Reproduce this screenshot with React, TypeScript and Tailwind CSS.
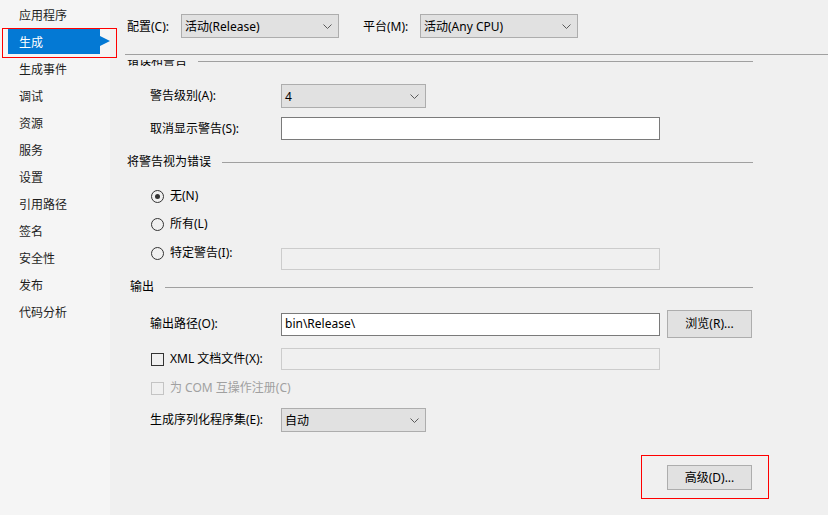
import React from 'react';

const font = { fontFamily: '"Segoe UI", "Noto Sans", "Noto Sans CJK SC", sans-serif' };

const navItems = ['应用程序', '生成', '生成事件', '调试', '资源', '服务', '设置', '引用路径', '签名', '安全性', '发布', '代码分析'];

const Chevron = () => (
  <svg width="9" height="5" viewBox="0 0 9 5" fill="none">
    <path d="M0.5 0.5 L4.5 4.5 L8.5 0.5" stroke="#5a5a5a" strokeWidth="1" />
  </svg>
);

const Select = ({ value, width }: { value: string; width: string }) => (
  <div className={`flex h-[24px] ${width} shrink-0 items-center justify-between border border-[#adadad] bg-[#e1e1e1] pl-[3px] pr-[6px]`}>
    <span className="pt-px">{value}</span>
    <Chevron />
  </div>
);

const GroupHeader = ({ title, className }: { title: string; className: string }) => (
  <div className={`flex h-[16px] items-center ${className}`}>
    <span className="whitespace-nowrap leading-none">{title}</span>
    <div className="ml-[11px] h-px flex-1 bg-[#a0a0a0]" />
  </div>
);

const Radio = ({ checked, label }: { checked?: boolean; label: string }) => (
  <div className="flex items-center">
    <div className="flex h-[13px] w-[13px] items-center justify-center rounded-full border border-[#333333] bg-[#f0f0f0]">
      {checked && <div className="h-[5px] w-[5px] rounded-full bg-[#333333]" />}
    </div>
    <span className="ml-[6px]">{label}</span>
  </div>
);

export default function App() {
  return (
    <div className="relative flex h-[515px] w-[828px] overflow-hidden bg-[#f0f0f0] text-[12px] text-black" style={font}>
      {/* sidebar */}
      <div className="flex w-[110px] shrink-0 flex-col bg-[#f5f5f5] pt-[2px]">
        {navItems.map((item) =>
          item === '生成' ? (
            <div key={item} className="flex h-[27px] items-start">
              <div className="ml-[8px] flex h-[25px] w-[92px] items-center bg-[#0479d4] pl-[11px] pt-[2px] text-white">{item}</div>
              <div className="mt-[7px] h-0 w-0 border-y-[5px] border-l-[10px] border-y-transparent border-l-[#0479d4]" />
            </div>
          ) : (
            <div key={item} className="flex h-[27px] items-center pl-[19px] text-[#1e1e1e]">
              {item}
            </div>
          )
        )}
      </div>

      {/* main */}
      <div className="flex min-w-0 flex-1 flex-col">
        <div className="flex h-[54px] items-start pl-[17px] pt-[14px]">
          <div className="flex h-[24px] w-[54px] items-center pt-px">配置(C):</div>
          <Select value="活动(Release)" width="w-[158px]" />
          <div className="ml-[24px] flex h-[24px] w-[57px] items-center pt-px">平台(M):</div>
          <Select value="活动(Any CPU)" width="w-[158px]" />
        </div>
        <div className="ml-[15px] h-px bg-[#a0a0a0]" />

        <div className="mt-[5px] min-w-0 flex-1 overflow-hidden">
          <div className="-mt-[7px] flex flex-col pr-[75px]">
            <GroupHeader title="错误和警告" className="pl-[17px]" />

            <div className="mt-[15px] flex h-[24px] items-center pl-[40px]">
              <span className="w-[131px] shrink-0">警告级别(A):</span>
              <Select value="4" width="w-[145px]" />
            </div>
            <div className="mt-[9px] flex h-[23px] items-center pl-[40px]">
              <span className="w-[131px] shrink-0">取消显示警告(S):</span>
              <div className="h-[23px] w-[379px] shrink-0 border border-[#7a7a7a] bg-white" />
            </div>

            <GroupHeader title="将警告视为错误" className="mt-[14px] pl-[17px]" />

            <div className="mt-[16px] flex h-[20px] items-center pl-[41px]">
              <Radio checked label="无(N)" />
            </div>
            <div className="mt-[8px] flex h-[20px] items-center pl-[41px]">
              <Radio label="所有(L)" />
            </div>
            <div className="mt-[12px] flex items-start pl-[41px]">
              <div className="flex h-[14px] w-[130px] shrink-0 items-center">
                <Radio label="特定警告(I):" />
              </div>
              <div className="mt-[2px] h-[22px] w-[379px] shrink-0 border border-[#cccccc] bg-[#f0f0f0]" />
            </div>

            <GroupHeader title="输出" className="mt-[9px] pl-[20px]" />

            <div className="mt-[15px] flex h-[28px] items-center pl-[40px]">
              <span className="w-[131px] shrink-0">输出路径(O):</span>
              <div className="flex h-[23px] w-[379px] shrink-0 items-center border border-[#7a7a7a] bg-white pl-[3px]">bin\Release\</div>
              <div className="ml-[7px] flex h-[28px] w-[85px] shrink-0 items-center justify-center border border-[#adadad] bg-[#e1e1e1]">
                浏览(R)...
              </div>
            </div>

            <div className="mt-[10px] flex h-[22px] items-center pl-[41px]">
              <div className="flex w-[130px] shrink-0 items-center">
                <div className="h-[13px] w-[13px] border border-[#333333] bg-[#f0f0f0]" />
                <span className="ml-[6px] whitespace-nowrap">XML 文档文件(X):</span>
              </div>
              <div className="h-[22px] w-[379px] shrink-0 border border-[#cccccc] bg-[#f0f0f0]" />
            </div>

            <div className="mt-[10px] flex h-[16px] items-center pl-[41px] text-[#a0a0a0]">
              <div className="h-[13px] w-[13px] border border-[#c4c4c4] bg-[#f0f0f0]" />
              <span className="ml-[6px]">为 COM 互操作注册(C)</span>
            </div>

            <div className="mt-[12px] flex h-[24px] items-center pl-[40px]">
              <span className="w-[131px] shrink-0">生成序列化程序集(E):</span>
              <Select value="自动" width="w-[145px]" />
            </div>

            <div className="mt-[23px] flex pl-[531px]">
              <div className="h-[44px] w-[128px] shrink-0 border border-[#ff0000] pl-[25px] pt-[9px]">
                <div className="flex h-[25px] w-[85px] items-center justify-center border border-[#adadad] bg-[#e1e1e1]">
                  高级(D)...
                </div>
              </div>
            </div>
          </div>
        </div>
      </div>

      {/* annotation around selected item */}
      <div className="absolute left-[2px] top-[28px] h-[30px] w-[115px] border border-[#ff0000]" />
    </div>
  );
}
